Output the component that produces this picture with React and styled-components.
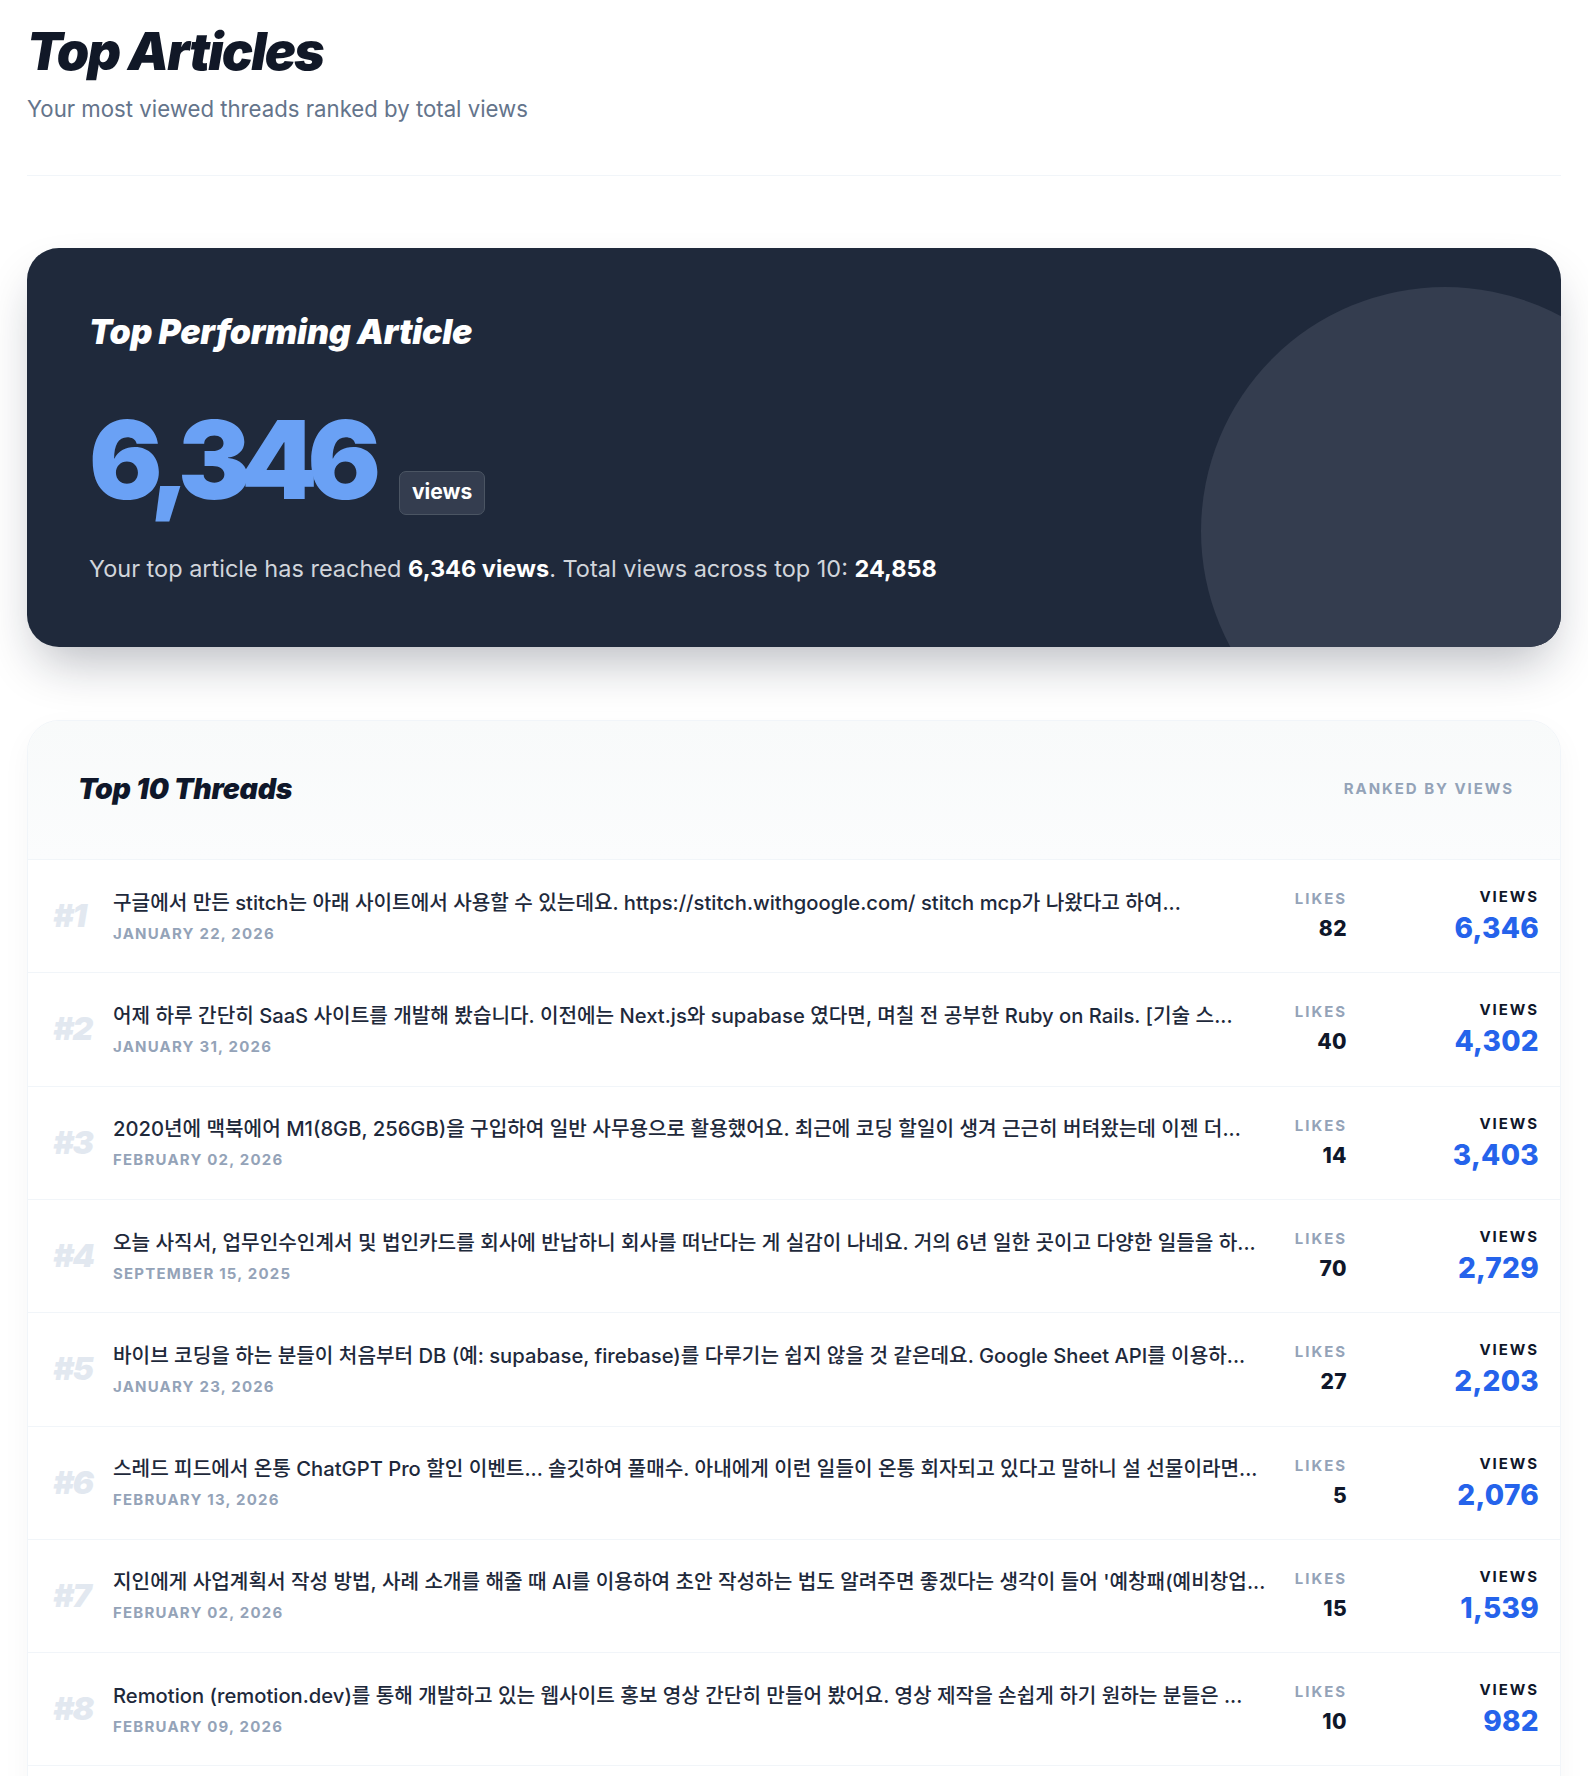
import React from "react";
import styled, { createGlobalStyle } from "styled-components";

const GlobalStyle = createGlobalStyle`
  * { box-sizing: border-box; }
  html, body { margin: 0; padding: 0; background: #ffffff; }
  body {
    font-family: Inter, "Noto Sans CJK KR", "Noto Sans", sans-serif;
    color: #0f172a;
    -webkit-font-smoothing: antialiased;
  }
`;

const Page = styled.main`
  padding: 23px 27px 0 27px;
`;

const PageHeader = styled.header`
  padding-bottom: 50px;
  border-bottom: 1px solid #f1f5f9;
`;

const PageTitle = styled.h1`
  margin: 0;
  font-size: 52px;
  line-height: 1.1;
  font-weight: 900;
  font-style: italic;
  letter-spacing: -0.035em;
  color: #111827;
`;

const PageSubtitle = styled.p`
  margin: 12px 0 0;
  font-size: 22.2px;
  line-height: 1.5;
  color: #64748b;
`;

const Hero = styled.section`
  position: relative;
  overflow: hidden;
  margin-top: 72px;
  padding: 64px 62px 61px 62px;
  background: #1f293b;
  border-radius: 32px;
  box-shadow: 0 25px 50px -12px rgba(15, 23, 42, 0.3);
`;

const HeroCircle = styled.div`
  position: absolute;
  top: 39px;
  right: -128px;
  width: 488px;
  height: 488px;
  border-radius: 50%;
  background: #343d4f;
`;

const HeroContent = styled.div`
  position: relative;
`;

const HeroTitle = styled.h2`
  margin: 0;
  font-size: 34px;
  line-height: 1.2;
  font-weight: 900;
  font-style: italic;
  letter-spacing: -0.008em;
  color: #ffffff;
`;

const HeroStatRow = styled.div`
  display: flex;
  align-items: baseline;
  gap: 28px;
  margin-top: 52px;
`;

const HeroNumber = styled.span`
  font-size: 109px;
  line-height: 1;
  font-weight: 900;
  letter-spacing: -0.092em;
  color: #6aa1f5;
`;

const Badge = styled.span`
  display: inline-block;
  padding: 6px 12px 8px;
  font-size: 21px;
  line-height: 1.3;
  font-weight: 700;
  color: #ffffff;
  background: #343d4f;
  border: 1px solid #4b5563;
  border-radius: 7px;
`;

const HeroSummary = styled.p`
  margin: 36px 0 0;
  font-size: 23.5px;
  line-height: 1.5;
  color: #d1d5db;

  strong {
    color: #ffffff;
    font-weight: 700;
  }
`;

const ListCard = styled.section`
  margin-top: 73px;
  border: 1px solid #f1f5f9;
  border-radius: 32px;
  overflow: hidden;
  background: #ffffff;
  box-shadow: 0 10px 30px rgba(15, 23, 42, 0.04);
`;

const ListHeader = styled.div`
  display: flex;
  align-items: center;
  justify-content: space-between;
  padding: 51px 46px 53px 50px;
  background: linear-gradient(180deg, #f8fafa 0%, #fbfcfd 100%);
  border-bottom: 1px solid #f1f5f9;
`;

const ListTitle = styled.h3`
  margin: 0;
  font-size: 28.5px;
  line-height: 1.2;
  font-weight: 900;
  font-style: italic;
  letter-spacing: -0.01em;
  color: #0f172a;
`;

const Label = styled.span`
  display: block;
  font-size: 15px;
  line-height: 20px;
  font-weight: 700;
  letter-spacing: 0.13em;
  text-transform: uppercase;
  color: ${(p) => (p.$dark ? "#0f172a" : "#94a3b8")};
`;

const Row = styled.div`
  display: flex;
  align-items: center;
  height: 113.3px;
  padding: 0 21px 0 25px;
  border-bottom: 1px solid #f1f5f9;
`;

const Rank = styled.span`
  flex: 0 0 60px;
  font-size: 32px;
  line-height: 1;
  font-weight: 900;
  font-style: italic;
  letter-spacing: -0.05em;
  color: #e2e8f0;
`;

const RowMain = styled.div`
  flex: 1;
  min-width: 0;
  display: flex;
  flex-direction: column;
  gap: 7px;
`;

const RowTitle = styled.div`
  font-size: 20.2px;
  line-height: 28px;
  font-weight: 500;
  color: #1e293b;
  white-space: nowrap;
  overflow: hidden;
  text-overflow: ellipsis;
`;

const RowDate = styled.div`
  font-size: 15px;
  line-height: 20px;
  font-weight: 700;
  letter-spacing: 0.08em;
  color: #94a3b8;
`;

const Stat = styled.div`
  flex: 0 0 ${(p) => p.$width}px;
  margin-left: ${(p) => p.$gap}px;
  display: flex;
  flex-direction: column;
  align-items: flex-end;
  gap: ${(p) => (p.$big ? 4 : 6)}px;
  text-align: right;
`;

const StatValue = styled.span`
  font-size: ${(p) => (p.$big ? 28 : 21)}px;
  line-height: ${(p) => (p.$big ? 34 : 28)}px;
  font-weight: 800;
  color: ${(p) => (p.$big ? "#2563eb" : "#0f172a")};
  letter-spacing: ${(p) => (p.$big ? "0.01em" : "0.02em")};
`;

const threads = [
  {
    title:
      "구글에서 만든 stitch는 아래 사이트에서 사용할 수 있는데요. https://stitch.withgoogle.com/ stitch mcp가 나왔다고 하여...",
    date: "JANUARY 22, 2026",
    likes: 82,
    views: "6,346",
  },
  {
    title:
      "어제 하루 간단히 SaaS 사이트를 개발해 봤습니다. 이전에는 Next.js와 supabase 였다면, 며칠 전 공부한 Ruby on Rails. [기술 스...",
    date: "JANUARY 31, 2026",
    likes: 40,
    views: "4,302",
  },
  {
    title:
      "2020년에 맥북에어 M1(8GB, 256GB)을 구입하여 일반 사무용으로 활용했어요. 최근에 코딩 할일이 생겨 근근히 버텨왔는데 이젠 더...",
    date: "FEBRUARY 02, 2026",
    likes: 14,
    views: "3,403",
  },
  {
    title:
      "오늘 사직서, 업무인수인계서 및 법인카드를 회사에 반납하니 회사를 떠난다는 게 실감이 나네요. 거의 6년 일한 곳이고 다양한 일들을 하...",
    date: "SEPTEMBER 15, 2025",
    likes: 70,
    views: "2,729",
  },
  {
    title:
      "바이브 코딩을 하는 분들이 처음부터 DB (예: supabase, firebase)를 다루기는 쉽지 않을 것 같은데요. Google Sheet API를 이용하...",
    date: "JANUARY 23, 2026",
    likes: 27,
    views: "2,203",
  },
  {
    title:
      "스레드 피드에서 온통 ChatGPT Pro 할인 이벤트... 솔깃하여 풀매수. 아내에게 이런 일들이 온통 회자되고 있다고 말하니 설 선물이라면...",
    date: "FEBRUARY 13, 2026",
    likes: 5,
    views: "2,076",
  },
  {
    title:
      "지인에게 사업계획서 작성 방법, 사례 소개를 해줄 때 AI를 이용하여 초안 작성하는 법도 알려주면 좋겠다는 생각이 들어 '예창패(예비창업...",
    date: "FEBRUARY 02, 2026",
    likes: 15,
    views: "1,539",
  },
  {
    title:
      "Remotion (remotion.dev)를 통해 개발하고 있는 웹사이트 홍보 영상 간단히 만들어 봤어요. 영상 제작을 손쉽게 하기 원하는 분들은 ...",
    date: "FEBRUARY 09, 2026",
    likes: 10,
    views: "982",
  },
  {
    title:
      "개인 프로젝트로 만든 서비스를 조금씩 개선하고 있어요. 사용자 피드백을 받아 기능을 하나씩 추가하는 중인데...",
    date: "JANUARY 27, 2026",
    likes: 9,
    views: "662",
  },
  {
    title:
      "요즘 AI 코딩 도구들을 이것저것 써보면서 느낀 점을 정리해 봤습니다. 도구마다 장단점이 분명한데요...",
    date: "FEBRUARY 05, 2026",
    likes: 8,
    views: "616",
  },
];

export default function App() {
  return (
    <>
      <GlobalStyle />
      <Page>
        <PageHeader>
          <PageTitle>Top Articles</PageTitle>
          <PageSubtitle>Your most viewed threads ranked by total views</PageSubtitle>
        </PageHeader>

        <Hero>
          <HeroCircle />
          <HeroContent>
            <HeroTitle>Top Performing Article</HeroTitle>
            <HeroStatRow>
              <HeroNumber>6,346</HeroNumber>
              <Badge>views</Badge>
            </HeroStatRow>
            <HeroSummary>
              Your top article has reached <strong>6,346 views</strong>. Total views across
              top 10: <strong>24,858</strong>
            </HeroSummary>
          </HeroContent>
        </Hero>

        <ListCard>
          <ListHeader>
            <ListTitle>Top 10 Threads</ListTitle>
            <Label>Ranked by views</Label>
          </ListHeader>
          {threads.map((t, i) => (
            <Row key={i}>
              <Rank>#{i + 1}</Rank>
              <RowMain>
                <RowTitle>{t.title}</RowTitle>
                <RowDate>{t.date}</RowDate>
              </RowMain>
              <Stat $width={80} $gap={0}>
                <Label>Likes</Label>
                <StatValue>{t.likes}</StatValue>
              </Stat>
              <Stat $width={112} $gap={80} $big>
                <Label $dark>Views</Label>
                <StatValue $big>{t.views}</StatValue>
              </Stat>
            </Row>
          ))}
        </ListCard>
      </Page>
    </>
  );
}
